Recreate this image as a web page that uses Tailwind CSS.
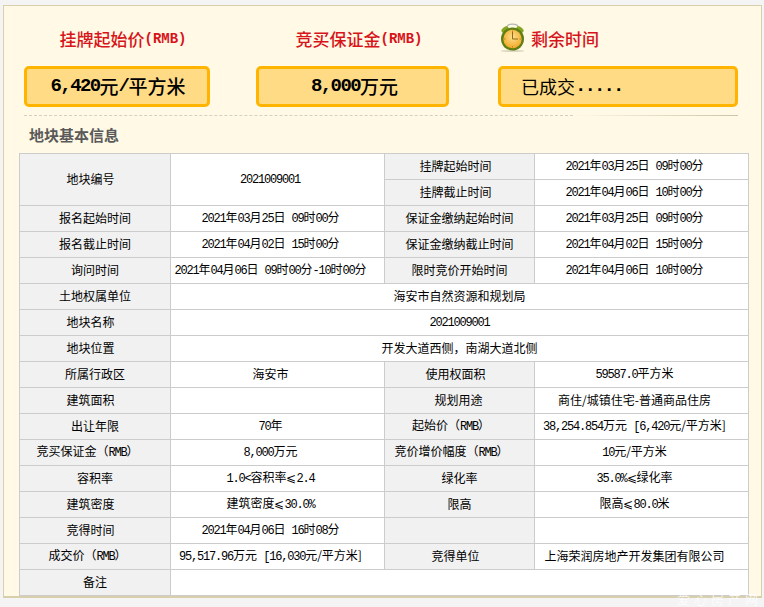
<!DOCTYPE html>
<html lang="zh-CN">
<head>
  <meta charset="UTF-8">
  <title>地块基本信息</title>
  <script src="https://cdn.jsdelivr.net/npm/@tailwindcss/browser@4"></script>
</head>
<body class="bg-[#f4f4f4] font-['Noto_Sans_CJK_SC',sans-serif] text-black overflow-hidden">
  <div class="relative w-[764px] h-[607px] pt-[5px] pl-[3px]">
    <div class="w-[759px] h-[593px] border border-[#d8d0ac] border-b-2 bg-[#fff9e6] pl-[15px]">

      <!-- price boxes -->
      <div class="flex pl-[5px] pt-[13px]">
        <div class="w-[186px] mr-[46px]">
          <div class="h-[40px] flex items-center justify-center pl-[12px] text-[17px] font-medium text-[#d7141a]">挂牌起始价<span class="font-['Liberation_Mono'] font-bold text-[14px]">(RMB)</span></div>
          <div class="mt-[7px] h-[41px] border-[3px] border-[#ffb400] rounded-[5px] bg-[#ffdb86] flex items-center justify-center pl-[2px] text-[19px] font-medium [&_span]:font-['Liberation_Mono'] [&_span]:font-bold [&_span]:tracking-[-1.6px]"><span>6,420</span>元<span>/</span>平方米</div>
        </div>
        <div class="w-[193px] mr-[49px]">
          <div class="h-[40px] flex items-center justify-center pl-[13px] text-[17px] font-medium text-[#d7141a]">竞买保证金<span class="font-['Liberation_Mono'] font-bold text-[14px]">(RMB)</span></div>
          <div class="mt-[7px] h-[41px] border-[3px] border-[#ffb400] rounded-[5px] bg-[#ffdb86] flex items-center justify-center pl-[4px] text-[19px] font-medium [&_span]:font-['Liberation_Mono'] [&_span]:font-bold [&_span]:tracking-[-1.6px]"><span>8,000</span>万元</div>
        </div>
        <div class="w-[240px]">
          <div class="h-[40px] flex items-center pl-[2px] gap-[6px] text-[17px] font-medium text-[#d7141a]">
            <svg width="25" height="30" viewBox="0 0 25 30" class="-mt-[4px]">
              <defs>
                <radialGradient id="clockFace" cx="0.5" cy="0.4" r="0.6">
                  <stop offset="0" stop-color="#fde08a"/>
                  <stop offset="1" stop-color="#f2a92c"/>
                </radialGradient>
              </defs>
              <ellipse cx="12.5" cy="29" rx="12" ry="1" fill="#dcd6c0"/>
              <path d="M6.5 6 C7 0.8 18 0.8 18.5 6" fill="none" stroke="#b4b8b4" stroke-width="1.3"/>
              <ellipse cx="5" cy="7.5" rx="4" ry="2.4" fill="#86a522" transform="rotate(-35 5 7.5)"/>
              <ellipse cx="20" cy="7.5" rx="4" ry="2.4" fill="#86a522" transform="rotate(35 20 7.5)"/>
              <circle cx="12.5" cy="17" r="11.5" fill="#5f7f12"/>
              <circle cx="12.5" cy="17" r="9.2" fill="url(#clockFace)"/>
              <path d="M12.5 9 V17 H18" fill="none" stroke="#8f6a1c" stroke-width="1"/>
              <path d="M12.5 8.5 v1.5 M12.5 24 v1.5 M4 17 h1.5 M19.5 17 h1.5" stroke="#b98a28" stroke-width="1"/>
            </svg>
            <span>剩余时间</span>
          </div>
          <div class="mt-[7px] h-[41px] border-[3px] border-[#ffb400] rounded-[5px] bg-[#ffdb86] flex items-center pl-[20px] text-[18px] [&_span]:font-['Liberation_Mono'] [&_span]:font-bold [&_span]:text-[19px] [&_span]:tracking-[-1.9px]">已成交<span>.....</span></div>
        </div>
      </div>

      <!-- separator -->
      <div class="ml-[5px] w-[714px] mt-[8px] flex items-center">
        <div class="w-[549px] border-t border-dashed border-[#d2d0c4]"></div>
        <div class="flex-1 h-px bg-gradient-to-r from-[#fff9e6] to-[#c9c3a8]"></div>
      </div>

      <h2 class="ml-[10px] mt-[8px] h-[22px] leading-[22px] text-[15px] font-bold text-[#5a5a5a]">地块基本信息</h2>

      <table class="mt-[7px] w-[730px] table-fixed border-collapse text-[12px] [&_td]:h-[26px] [&_td]:p-0 [&_td]:pb-[2px] [&_td]:border [&_td]:border-[#cccccc] [&_td]:text-center [&_td]:leading-none [&_td]:bg-white [&_td:nth-child(odd)]:bg-[#f1f1f1] [&_td:nth-child(2)]:pr-[14px] [&_td:nth-child(4)]:pr-[14px] [&_span]:font-['Liberation_Mono'] [&_span]:tracking-[-1.2px]">
        <colgroup>
          <col class="w-[151px]"><col class="w-[214px]"><col class="w-[150px]"><col class="w-[214px]">
        </colgroup>
        <tbody>
          <tr><td rowspan="2" class="!pr-[9px]">地块编号</td><td rowspan="2" class="!pr-[15px]"><span>2021009001</span></td><td class="!pr-[8px]">挂牌起始时间</td><td><span>2021</span>年<span>03</span>月<span>25</span>日<span> 09</span>时<span>00</span>分</td></tr>
          <tr><td class="!pr-[8px]">挂牌截止时间</td><td><span>2021</span>年<span>04</span>月<span>06</span>日<span> 10</span>时<span>00</span>分</td></tr>
          <tr><td>报名起始时间</td><td><span>2021</span>年<span>03</span>月<span>25</span>日<span> 09</span>时<span>00</span>分</td><td>保证金缴纳起始时间</td><td><span>2021</span>年<span>03</span>月<span>25</span>日<span> 09</span>时<span>00</span>分</td></tr>
          <tr><td>报名截止时间</td><td><span>2021</span>年<span>04</span>月<span>02</span>日<span> 15</span>时<span>00</span>分</td><td>保证金缴纳截止时间</td><td><span>2021</span>年<span>04</span>月<span>02</span>日<span> 15</span>时<span>00</span>分</td></tr>
          <tr><td>询问时间</td><td><span>2021</span>年<span>04</span>月<span>06</span>日<span> 09</span>时<span>00</span>分<span>-10</span>时<span>00</span>分</td><td>限时竞价开始时间</td><td><span>2021</span>年<span>04</span>月<span>06</span>日<span> 10</span>时<span>00</span>分</td></tr>
          <tr><td>土地权属单位</td><td colspan="3" class="!pr-0">海安市自然资源和规划局</td></tr>
          <tr><td class="!pr-[9px]">地块名称</td><td colspan="3" class="!pr-0"><span>2021009001</span></td></tr>
          <tr><td class="!pr-[9px]">地块位置</td><td colspan="3" class="!pr-0">开发大道西侧，南湖大道北侧</td></tr>
          <tr><td>所属行政区</td><td>海安市</td><td class="!pr-[8px]">使用权面积</td><td><span>59587.0</span>平方米</td></tr>
          <tr><td class="!pr-[9px]">建筑面积</td><td></td><td class="!pr-[2px]">规划用途</td><td>商住/城镇住宅-普通商品住房</td></tr>
          <tr><td>出让年限</td><td><span>70</span>年</td><td class="!pr-[17px]">起始价（<span>RMB</span>）</td><td><span>38,254.854</span>万元<span> [6,420</span>元/平方米]</td></tr>
          <tr><td class="!pr-[15px]">竞买保证金（<span>RMB</span>）</td><td><span>8,000</span>万元</td><td class="!pr-[16px]">竞价增价幅度（<span>RMB</span>）</td><td><span>10</span>元/平方米</td></tr>
          <tr><td>容积率</td><td><span>1.0&lt;</span>容积率⩽<span>2.4</span></td><td>绿化率</td><td><span>35.0%</span>⩽绿化率</td></tr>
          <tr><td class="!pr-[9px]">建筑密度</td><td>建筑密度⩽<span>30.0%</span></td><td>限高</td><td>限高⩽<span>80.0</span>米</td></tr>
          <tr><td class="!pr-[9px]">竞得时间</td><td><span>2021</span>年<span>04</span>月<span>06</span>日<span> 16</span>时<span>08</span>分</td><td></td><td></td></tr>
          <tr><td class="!pr-[15px]">成交价（<span>RMB</span>）</td><td><span>95,517.96</span>万元<span> [16,030</span>元/平方米]</td><td class="!pr-[8px]">竞得单位</td><td>上海荣润房地产开发集团有限公司</td></tr>
          <tr><td>备注</td><td colspan="3" class="!pr-0"></td></tr>
        </tbody>
      </table>
    </div>
    <!-- watermark -->
    <div class="absolute left-[677px] top-[592px] text-[13px] leading-[14px] tracking-[4px] font-light text-white whitespace-nowrap">爱心房产网</div>
  </div>
</body>
</html>
